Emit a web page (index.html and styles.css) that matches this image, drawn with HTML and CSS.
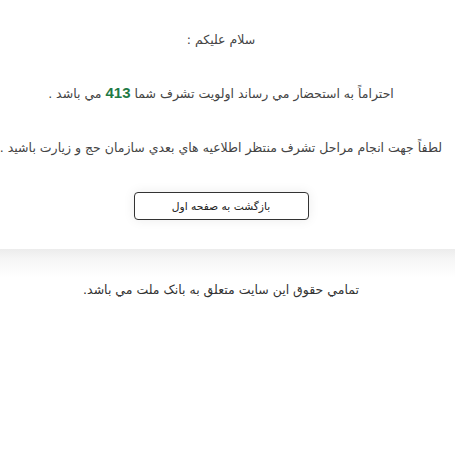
FILE: index.html
```html
<!DOCTYPE html>
<html lang="fa" dir="rtl">
<head>
<meta charset="utf-8">
<link rel="stylesheet" href="styles.css">
</head>
<body>
<div class="panel">
  <p class="line greet">سلام عليکم :</p>
  <p class="line">احتراماً به استحضار مي رساند اولويت تشرف شما <b class="num">413</b> مي باشد .</p>
  <p class="line wide">لطفاً جهت انجام مراحل تشرف منتظر اطلاعيه هاي بعدي سازمان حج و زيارت باشيد .</p>
  <div class="actions"><button class="btn">بازگشت به صفحه اول</button></div>
</div>
<div class="footer">
  <p class="copy">تمامي حقوق اين سايت متعلق به بانک ملت مي باشد.</p>
</div>
</body>
</html>
```
FILE: styles.css
```css
html, body { margin: 0; padding: 0; background: #fff; }
body {
  font-family: "DejaVu Sans", sans-serif;
  color: #444;
  overflow: hidden;
}
.panel {
  width: 442px;
  height: 249px;
  margin: 0 auto 0 0;
  text-align: center;
  padding-top: 30px;
  box-sizing: border-box;
}
.line {
  margin: 0;
  font-size: 12.5px;
  line-height: 20px;
  white-space: nowrap;
}
.greet { margin-bottom: 33px; }
.line + .line { margin-bottom: 34px; }
.num {
  font-family: "Liberation Sans", sans-serif;
  color: #1f7a45;
  font-size: 15px;
  font-weight: bold;
}
.wide { margin-bottom: 24px; }
.actions { display: flex; justify-content: center; }
.btn {
  width: 175px;
  height: 28px;
  background: #fff;
  border: 1px solid #333;
  border-radius: 4px;
  font-family: "DejaVu Sans", sans-serif;
  font-size: 10.7px;
  color: #222;
  box-shadow: 0 0 12px rgba(0,0,0,0.08);
}
.footer {
  height: 206px;
  background: linear-gradient(to bottom, #ececec 0, #f6f6f6 10px, #fff 28px);
  width: 100%;
}
.copy {
  margin: 0 auto 0 0;
  padding-top: 31px;
  width: 442px;
  text-align: center;
  font-size: 12.5px;
  line-height: 20px;
  color: #333;
}
```
